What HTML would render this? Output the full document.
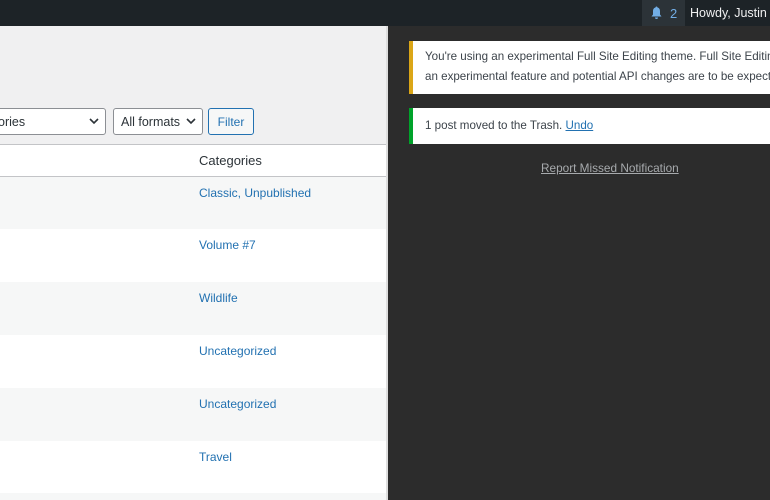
<!DOCTYPE html>
<html style="overflow:hidden;width:770px;height:500px"><head><meta charset="utf-8"><style>
*{margin:0;padding:0;box-sizing:border-box}
body{width:770px;height:500px;overflow:hidden;position:relative;font-family:"Liberation Sans",sans-serif;font-size:12px;background:#2c2c2c}
.top{position:absolute;left:0;top:0;width:770px;height:26px;background:#1d2327}
.bell{position:absolute;left:642px;top:0;width:43px;height:26px;background:#2c3338;color:#72aee6;font-size:13px}
.howdy{position:absolute;left:690px;top:6px;color:#f0f0f1;white-space:nowrap;font-size:12.5px}
.left{position:absolute;left:0;top:26px;width:388px;height:474px;background:#f0f0f1;border-right:2px solid #ddd}
.sel{position:absolute;top:108px;height:27px;background:#fff;border:1px solid #8c8f94;border-radius:3px;color:#2c3338;padding:6px 7px;font-size:12.5px;white-space:nowrap}
.sel svg{position:absolute;right:6px;top:9px}
.btn{position:absolute;left:208px;top:108px;width:46px;height:27px;border:1px solid #2271b1;border-radius:3px;color:#2271b1;background:#f6f7f7;padding:6px 0;text-align:center;font-size:12px}
.thead{position:absolute;left:0;top:144px;width:386px;height:33px;background:#fff;border-top:1px solid #c3c4c7;border-bottom:1px solid #c3c4c7;color:#2c3338;padding:8px 0 0 199px;font-size:13px}
.row{position:absolute;left:0;width:386px;height:53px;color:#2271b1;padding:9px 0 0 199px;font-size:12px;white-space:nowrap}
.g{background:#f6f7f7}.w{background:#fff}
.n{position:absolute;left:409px;width:361px;background:#fff;color:#3c434a;font-size:11.6px;line-height:20px;padding:0 12px;white-space:nowrap;overflow:hidden}
</style></head><body>
<div class="top"></div>
<div class="bell"><svg style="position:absolute;left:8px;top:6px" width="13" height="14" viewBox="0 0 13 14"><path d="M6.5 0.5c-0.7 0-1 .5-1 1C3.5 2 3 3.5 3 5.5v3L1.5 10.5h10L10 8.5v-3C10 3.5 9.5 2 7.5 1.5c0-.5-.3-1-1-1zM5 11.5a1.5 1.5 0 003 0z" fill="#72aee6"/></svg><span style="position:absolute;left:28px;top:6px">2</span></div>
<div class="howdy">Howdy, Justin T</div>
<div class="left"></div>
<div class="sel" style="left:-10px;width:116px">ories<svg width="10" height="7" viewBox="0 0 10 7"><path d="M1 1l4 4 4-4" stroke="#2c3338" stroke-width="1.6" fill="none"/></svg></div>
<div class="sel" style="left:113px;width:90px">All formats<svg width="10" height="7" viewBox="0 0 10 7"><path d="M1 1l4 4 4-4" stroke="#2c3338" stroke-width="1.6" fill="none"/></svg></div>
<div class="btn">Filter</div>
<div class="thead">Categories</div>
<div class="row g" style="top:177px">Classic, Unpublished</div>
<div class="row w" style="top:229px">Volume #7</div>
<div class="row g" style="top:282px">Wildlife</div>
<div class="row w" style="top:335px">Uncategorized</div>
<div class="row g" style="top:388px">Uncategorized</div>
<div class="row w" style="top:441px">Travel</div>
<div class="row g" style="top:493px;height:7px"></div>
<div class="n" style="top:41px;height:53px;border-left:4px solid #dba617;padding-top:6px">You're using an experimental Full Site Editing theme. Full Site Editing is<br>an experimental feature and potential API changes are to be expected</div>
<div class="n" style="top:108px;height:36px;border-left:4px solid #00a32a;padding-top:8px">1 post moved to the Trash. <span style="color:#2271b1;text-decoration:underline">Undo</span></div>
<div style="position:absolute;left:541px;top:161px;color:#a7aaad;text-decoration:underline;font-size:11.8px;white-space:nowrap">Report Missed Notification</div>
</body></html>
